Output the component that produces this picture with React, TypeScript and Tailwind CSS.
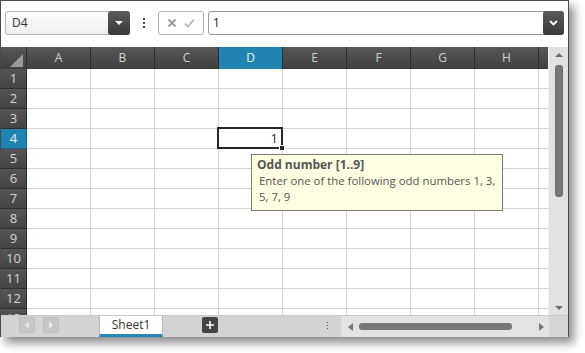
import React from "react";

const COLS = ["A", "B", "C", "D", "E", "F", "G", "H"];
const ROWS = [1, 2, 3, 4, 5, 6, 7, 8, 9, 10, 11, 12, 13];

function App() {
	return (
		<div className="w-[585px] h-[353px] bg-white font-['Open_Sans',sans-serif]">
			<div className="w-[569px] h-[337px] border border-[#4b4b4b] bg-white flex flex-col shadow-[5px_6px_9px_rgba(0,0,0,0.45)]">
				{/* Toolbar */}
				<div className="h-[46px] flex items-start pt-[10px] pl-[4px] shrink-0">
					<div className="w-[125px] h-[24px] flex rounded-[3px] border border-[#b4b4b4] bg-gradient-to-b from-white to-[#efefef]">
						<div className="flex-1 pl-[6px] text-[12px] leading-[22px] text-[#333]">D4</div>
						<div className="w-[22px] h-[24px] -mt-px -mr-px rounded-[3px] bg-gradient-to-b from-[#5a5a5a] to-[#3a3a3a] flex items-center justify-center">
							<div className="w-0 h-0 border-l-[4px] border-r-[4px] border-t-[4px] border-l-transparent border-r-transparent border-t-white" />
						</div>
					</div>
					<div className="w-[28px] h-[24px] flex flex-col items-center justify-center gap-[2px]">
						<div className="w-[2px] h-[2px] bg-[#444]" />
						<div className="w-[2px] h-[2px] bg-[#444]" />
						<div className="w-[2px] h-[2px] bg-[#444]" />
					</div>
					<div className="w-[46px] h-[24px] rounded-[3px] border border-[#b4b4b4] flex items-center justify-around px-[4px]">
						<svg width="10" height="10" viewBox="0 0 10 10">
							<path d="M1.5 1.5 L8.5 8.5 M8.5 1.5 L1.5 8.5" stroke="#9a9a9a" strokeWidth="1.8" />
						</svg>
						<svg width="11" height="10" viewBox="0 0 11 10">
							<path d="M1 5.5 L4 8.5 L10 1.5" stroke="#b8b8b8" strokeWidth="1.8" fill="none" />
						</svg>
					</div>
					<div className="ml-[4px] w-[356px] h-[24px] flex rounded-[3px] border border-[#9a9a9a] bg-white">
						<div className="flex-1 pl-[4px] text-[12px] leading-[22px] text-[#222]">1</div>
						<div className="w-[21px] h-[24px] -mt-px -mr-px rounded-[3px] bg-gradient-to-b from-[#5a5a5a] to-[#3a3a3a] flex items-center justify-center">
							<svg width="9" height="6" viewBox="0 0 9 6">
								<path d="M1 1 L4.5 4.5 L8 1" stroke="white" strokeWidth="1.8" fill="none" />
							</svg>
						</div>
					</div>
				</div>

				{/* Sheet area */}
				<div className="h-[268px] flex shrink-0">
					<div className="w-[547px] overflow-hidden relative">
						<div className="h-[22px] flex">
							<div className="w-[26px] h-[22px] bg-gradient-to-b from-[#575757] to-[#3f3f3f] border-r border-[#2e2e2e] relative">
								<div className="absolute right-[3px] bottom-[2px] w-0 h-0 border-l-[13px] border-l-transparent [border-bottom:13px_solid_#9a9a9a]" />
							</div>
							{COLS.map((c) => (
								<div
									key={c}
									className={`w-[64px] shrink-0 h-[22px] border-r border-[#2e2e2e] text-center text-[12px] leading-[22px] ${
										c === "D"
											? "bg-[#1f84b2] text-[#e8f4fa]"
											: "bg-gradient-to-b from-[#575757] to-[#3f3f3f] text-[#cfcfcf]"
									}`}
								>
									{c}
								</div>
							))}
							<div className="w-[9px] shrink-0 h-[22px] bg-gradient-to-b from-[#575757] to-[#3f3f3f]" />
						</div>
						{ROWS.map((r) => (
							<div key={r} className="h-[20px] flex">
								<div
									className={`w-[26px] shrink-0 h-[20px] border-r border-b text-center text-[13px] leading-[19px] ${
										r === 4
											? "bg-[#1f84b2] border-[#17668a] text-[#e8f4fa]"
											: "bg-gradient-to-b from-[#545454] to-[#444] border-[#2e2e2e] text-[#d4d4d4]"
									}`}
								>
									{r}
								</div>
								{COLS.map((c) => (
									<div key={c} className="w-[64px] shrink-0 h-[20px] border-r border-b border-[#d4d4d4]" />
								))}
								<div className="w-[9px] shrink-0 h-[20px] border-b border-[#d4d4d4]" />
							</div>
						))}

						{/* Active cell D4 */}
						<div className="absolute left-[216px] top-[80px] w-[66px] h-[22px] border-2 border-[#262626] text-right pr-[3px] text-[13px] leading-[18px] text-[#1c2a4a]">
							1
						</div>
						<div className="absolute left-[278px] top-[98px] w-[6px] h-[6px] bg-[#262626] border border-white" />

						{/* Validation tooltip */}
						<div className="absolute left-[250px] top-[107px] w-[252px] h-[57px] bg-[#ffffe1] border border-[#7a7a7a] pl-[5px] pt-[2px] text-[11.4px] leading-[16px] text-[#555]">
							<div className="font-bold text-[12px]">Odd number [1..9]</div>
							<div className="pl-[2px] whitespace-nowrap">
								Enter one of the following odd numbers 1, 3,
								<br />
								5, 7, 9
							</div>
						</div>
					</div>

					{/* Vertical scrollbar */}
					<div className="w-[20px] bg-[#e1e1e1] border-l border-[#ececec] flex flex-col items-center">
						<div className="mt-[6px] w-0 h-0 border-l-[4px] border-r-[4px] border-b-[4px] border-l-transparent border-r-transparent border-b-[#6e6e6e]" />
						<div className="mt-[8px] w-[8px] h-[132px] rounded-[3px] bg-[#777] border border-[#6a6a6a]" />
						<div className="mt-auto mb-[5px] w-0 h-0 border-l-[4px] border-r-[4px] border-t-[4px] border-l-transparent border-r-transparent border-t-[#6e6e6e]" />
					</div>
				</div>

				{/* Bottom bar */}
				<div className="flex-1 flex bg-[#d3d3d3] border-t border-[#c8c8c8]">
					<div className="w-[98px] flex items-start pt-[1px] pl-[18px] gap-[8px]">
						<div className="w-[16px] h-[16px] rounded-[2px] bg-[#c6c6c6] border border-[#bdbdbd] flex items-center justify-center">
							<div className="w-0 h-0 border-t-[4px] border-b-[4px] border-r-[4px] border-t-transparent border-b-transparent border-r-[#e6e6e6]" />
						</div>
						<div className="w-[16px] h-[16px] rounded-[2px] bg-[#c6c6c6] border border-[#bdbdbd] flex items-center justify-center">
							<div className="w-0 h-0 border-t-[4px] border-b-[4px] border-l-[4px] border-t-transparent border-b-transparent border-l-[#e6e6e6]" />
						</div>
					</div>
					<div className="w-[64px] bg-white border-x border-[#b8b8b8] border-b-[3px] border-b-[#2489b5] text-center text-[12px] leading-[18px] text-[#333]">
						Sheet1
					</div>
					<div className="w-[178px] flex items-start pt-[1px] pl-[39px]">
						<div className="w-[16px] h-[16px] rounded-[2px] bg-[#444] flex items-center justify-center">
							<svg width="10" height="10" viewBox="0 0 10 10">
								<path d="M5 1 V9 M1 5 H9" stroke="white" strokeWidth="1.6" />
							</svg>
						</div>
						<div className="ml-auto mr-[13px] mt-[5px] flex flex-col gap-[2px]">
							<div className="w-px h-px bg-[#555]" />
							<div className="w-px h-px bg-[#555]" />
							<div className="w-px h-px bg-[#555]" />
						</div>
					</div>
					<div className="w-[208px] bg-[#e3e3e3] flex items-center pl-[7px] pr-[5px]">
						<div className="w-0 h-0 border-t-[4px] border-b-[4px] border-r-[5px] border-t-transparent border-b-transparent border-r-[#777]" />
						<div className="ml-[6px] w-[153px] h-[7px] rounded-[3px] bg-[#777]" />
						<div className="ml-auto w-0 h-0 border-t-[4px] border-b-[4px] border-l-[5px] border-t-transparent border-b-transparent border-l-[#777]" />
					</div>
					<div className="flex-1 bg-[#d6d6d6]" />
				</div>
			</div>
		</div>
	);
}

export default App;
